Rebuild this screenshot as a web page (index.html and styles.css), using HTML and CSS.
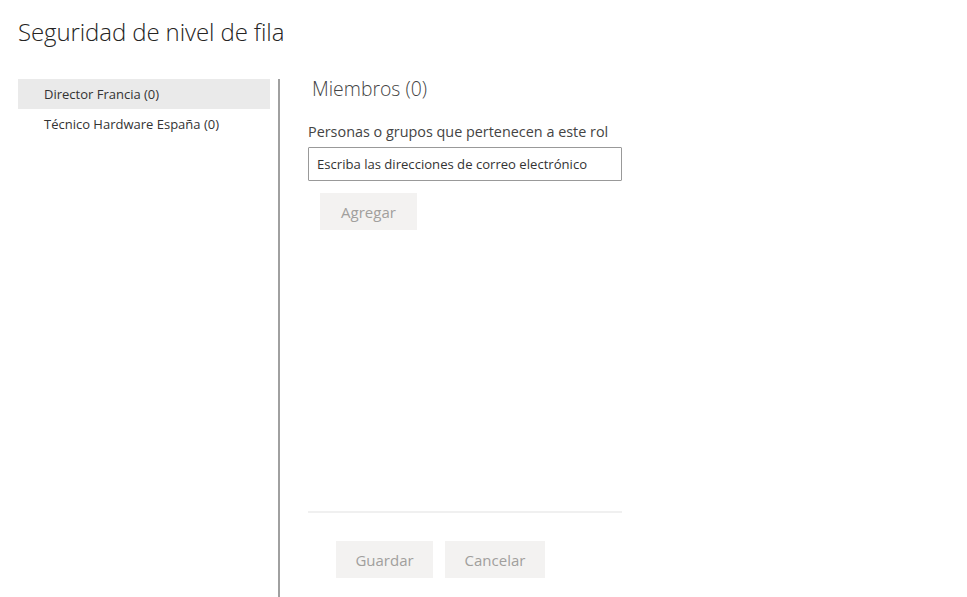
FILE: index.html
```html
<!DOCTYPE html>
<html lang="es">
<head>
<meta charset="utf-8">
<title>Seguridad de nivel de fila</title>
<link rel="stylesheet" href="styles.css">
</head>
<body>
<div class="page">
  <h1 class="title">Seguridad de nivel de fila</h1>
  <div class="main">
    <ul class="roles">
      <li class="role selected">Director Francia (0)</li>
      <li class="role">Técnico Hardware España (0)</li>
    </ul>
    <div class="divider"></div>
    <div class="members">
      <h2 class="members-title">Miembros (0)</h2>
      <label class="field-label" for="emails">Personas o grupos que pertenecen a este rol</label>
      <input id="emails" class="email-input" type="text" placeholder="Escriba las direcciones de correo electrónico">
      <button class="btn btn-add" type="button">Agregar</button>
      <div class="spacer"></div>
      <div class="footer">
        <button class="btn btn-save" type="button">Guardar</button>
        <button class="btn btn-cancel" type="button">Cancelar</button>
      </div>
    </div>
  </div>
</div>
</body>
</html>
```
FILE: styles.css
```css
* { box-sizing: border-box; }
html, body { margin: 0; padding: 0; height: 100%; background: #fff; }
body {
  font-family: "Segoe UI", "Open Sans", "Noto Sans", sans-serif;
  color: #333;
  overflow: hidden;
}
.page {
  display: flex;
  flex-direction: column;
  height: 597px;
}
.title {
  margin: 0;
  padding: 14px 0 0 18px;
  height: 79px;
  font-size: 24px;
  line-height: 36px;
  font-weight: 300;
  color: #252423;
  letter-spacing: -0.1px;
}
.main {
  flex: 1;
  display: flex;
  min-height: 0;
}
.roles {
  list-style: none;
  margin: 0 0 0 18px;
  padding: 0;
  width: 252px;
}
.role {
  height: 30px;
  line-height: 30px;
  padding-left: 26px;
  font-size: 13px;
  color: #333;
}
.role.selected { background: #eaeaea; }
.divider {
  width: 2px;
  margin-left: 8px;
  background: #a0a0a0;
}
.members {
  display: flex;
  flex-direction: column;
  align-items: flex-start;
  margin-left: 28px;
  width: 314px;
}
.members-title {
  margin: 0;
  padding-left: 4px;
  height: 43px;
  line-height: 20px;
  font-size: 19.4px;
  font-weight: 300;
  color: #444;
}
.field-label {
  font-size: 14.4px;
  line-height: 20px;
  height: 25px;
  color: #444;
}
.email-input {
  width: 314px;
  height: 34px;
  border: 1px solid #999;
  border-radius: 1px;
  padding: 0 8px;
  font-family: inherit;
  font-size: 13.1px;
  color: #333;
  outline: none;
}
.email-input::placeholder { color: #333; opacity: 1; }
.btn {
  border: none;
  background: #f3f2f1;
  color: #a19f9d;
  font-family: inherit;
  font-size: 15px;
  height: 37px;
  padding: 0;
  cursor: default;
}
.btn-add {
  margin: 12px 0 0 12px;
  width: 97px;
}
.spacer { flex: 1; }
.footer {
  width: 314px;
  border-top: 2px solid #f0f0f0;
  padding: 28px 0 19px 28px;
  display: flex;
  gap: 12px;
}
.btn-save { width: 97px; }
.btn-cancel { width: 100px; }
```
